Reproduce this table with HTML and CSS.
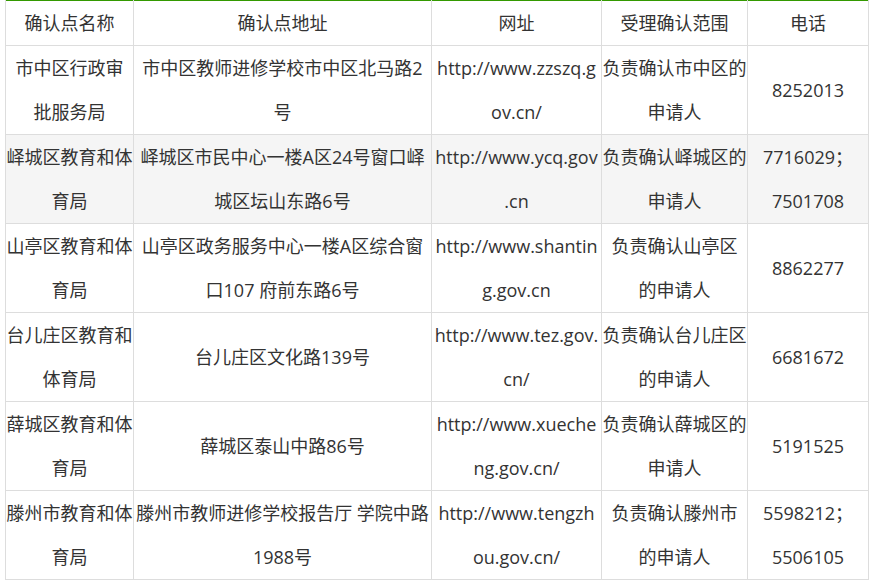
FILE: index.html
```html
<!DOCTYPE html>
<html lang="zh-CN">
<head>
<meta charset="utf-8">
<title>确认点</title>
<link rel="stylesheet" href="styles.css">
</head>
<body>
<table class="sites">
  <colgroup>
    <col class="c-name"><col class="c-addr"><col class="c-url"><col class="c-scope"><col class="c-tel">
  </colgroup>
  <thead>
    <tr><th>确认点名称</th><th>确认点地址</th><th>网址</th><th>受理确认范围</th><th>电话</th></tr>
  </thead>
  <tbody>
    <tr><td>市中区行政审<br>批服务局</td><td>市中区教师进修学校市中区北马路2号</td><td class="url">http://www.zzszq.g<br>ov.cn/</td><td>负责确认市中区的申请人</td><td>8252013</td></tr>
    <tr class="alt"><td>峄城区教育和体育局</td><td>峄城区市民中心一楼A区24号窗口峄城区坛山东路6号</td><td class="url">http://www.ycq.gov<br>.cn</td><td>负责确认峄城区的申请人</td><td>7716029；<br>7501708</td></tr>
    <tr><td>山亭区教育和体育局</td><td>山亭区政务服务中心一楼A区综合窗口107 府前东路6号</td><td class="url">http://www.shantin<br>g.gov.cn</td><td>负责确认山亭区<br>的申请人</td><td>8862277</td></tr>
    <tr><td>台儿庄区教育和体育局</td><td>台儿庄区文化路139号</td><td class="url">http://www.tez.gov.<br>cn/</td><td>负责确认台儿庄区<br>的申请人</td><td>6681672</td></tr>
    <tr><td>薛城区教育和体育局</td><td>薛城区泰山中路86号</td><td class="url">http://www.xueche<br>ng.gov.cn/</td><td>负责确认薛城区的申请人</td><td>5191525</td></tr>
    <tr><td>滕州市教育和体育局</td><td>滕州市教师进修学校报告厅 学院中路1988号</td><td class="url">http://www.tengzh<br>ou.gov.cn/</td><td>负责确认滕州市<br>的申请人</td><td>5598212；<br>5506105</td></tr>
  </tbody>
</table>
</body>
</html>
```
FILE: styles.css
```css
html, body {
  margin: 0;
  padding: 0;
  background: #ffffff;
}
body {
  padding-left: 5px;
  font-family: "Open Sans", "Noto Sans CJK SC", sans-serif;
  color: #333333;
}
.sites {
  border-collapse: collapse;
  table-layout: fixed;
  width: 864px;
  border-top: 1px solid #339900;
  font-size: 18px;
  line-height: 44px;
}
.c-name { width: 128px; }
.c-addr { width: 298px; }
.c-url { width: 170px; }
.c-scope { width: 146px; }
.c-tel { width: 121px; }
.sites th,
.sites td {
  border: 1px solid #dddddd;
  padding: 0;
  text-align: center;
  vertical-align: middle;
  font-weight: normal;
  word-break: break-all;
  overflow-wrap: anywhere;
}
.sites thead th {
  border-top: none;
}
.sites tr.alt td {
  background: #f5f5f5;
}
```
